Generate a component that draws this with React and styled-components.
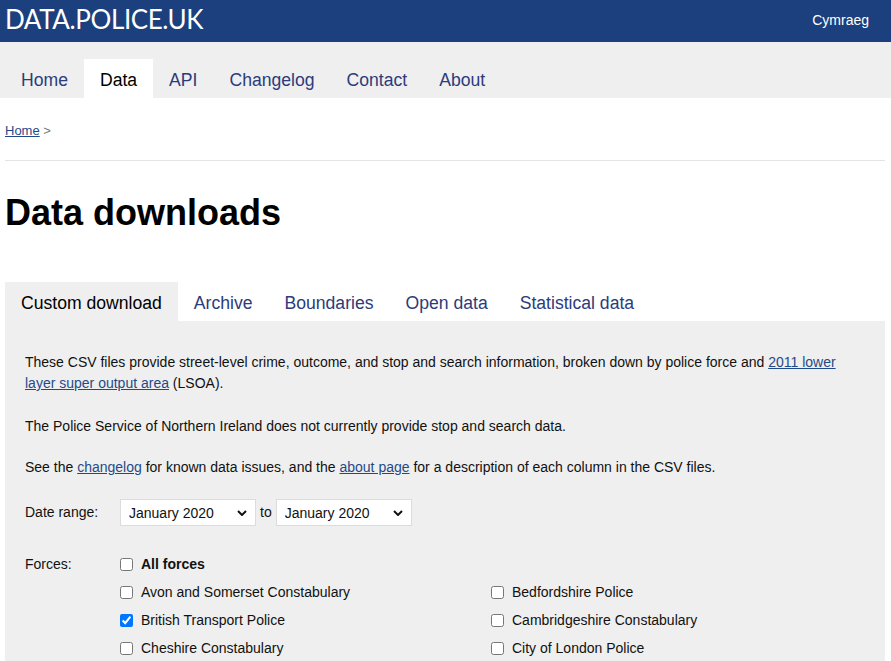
import React from 'react';
import styled, { createGlobalStyle, css } from 'styled-components';

const colors = {
  header: '#1c3f7d',
  nav: '#2c3b7c',
  link: '#1f4a8a',
  grey: '#efefef',
  text: '#111',
};

const GlobalStyle = createGlobalStyle`
  html, body {
    margin: 0;
    padding: 0;
    background: #fff;
    font-family: "Liberation Sans", Arial, sans-serif;
    color: ${colors.text};
  }
`;

const Header = styled.header`
  height: 42px;
  padding: 0 22px 0 5px;

  display: flex;
  justify-content: space-between;
  align-items: center;

  background: ${colors.header};
`;

const Logo = styled.div`
  margin-top: -4px;

  font-family: Lato, "Open Sans", sans-serif;
  font-size: 26px;
  letter-spacing: -0.4px;
  color: #fff;
`;

const LangLink = styled.a`
  margin-top: -2px;

  font-size: 14px;
  color: #fff;
  text-decoration: none;
`;

const Nav = styled.nav`
  height: 56px;
  padding: 17px 0 0 5px;
  box-sizing: border-box;

  display: flex;
  align-items: flex-end;

  background: ${colors.grey};
`;

const TabItem = styled.a(({ active, fill }) => {
  return css`
    height: 39px;
    padding: 3px 16px 0;
    box-sizing: border-box;

    display: flex;
    align-items: center;

    font-size: 17.6px;
    color: ${active ? '#000' : colors.nav};
    text-decoration: none;

    background: ${active ? fill : 'transparent'};
  `;
});

const Main = styled.main`
  padding: 0 6px 40px 5px;
`;

const Breadcrumb = styled.div`
  height: 63px;
  padding-top: 25px;
  box-sizing: border-box;

  font-size: 13px;
  color: #777;

  border-bottom: 1px solid #e4e4e4;
`;

const Link = styled.a`
  color: ${colors.link};
  text-decoration: underline;
`;

const Title = styled.h1`
  margin: 31px 0 0;
  height: 90px;

  font-size: 36px;
  font-weight: bold;
  color: #000;
`;

const Tabs = styled.div`
  display: flex;
`;

const Panel = styled.section`
  padding: 31px 20px 20px;

  font-size: 14px;
  line-height: 21px;

  background: ${colors.grey};
`;

const Para = styled.p`
  margin: 0 0 ${({ gap }) => gap}px;
`;

const FieldRow = styled.div`
  display: flex;
  align-items: ${({ top }) => (top ? 'flex-start' : 'center')};
  margin-bottom: ${({ gap }) => gap || 0}px;
`;

const FieldLabel = styled.div`
  width: 95px;
  flex-shrink: 0;
`;

const Select = styled.select`
  width: 136px;
  height: 27px;
  padding: 0 0 0 8px;
  box-sizing: border-box;

  appearance: none;
  font-family: inherit;
  font-size: 14px;
  color: #111;

  background: #fff url("data:image/svg+xml,%3Csvg xmlns='http://www.w3.org/2000/svg' width='10' height='6' viewBox='0 0 10 6'%3E%3Cpath d='M1 1l4 4 4-4' fill='none' stroke='%23111' stroke-width='2'/%3E%3C/svg%3E") no-repeat right 8px center;
  border: 1px solid #dcdcdc;
  border-radius: 0;
`;

const To = styled.span`
  margin: 0 4px;
`;

const ForceGrid = styled.div`
  display: grid;
  grid-template-columns: 371px 371px;
  row-gap: 7px;
`;

const Check = styled.label(({ bold, wide }) => {
  return css`
    display: flex;
    align-items: center;
    height: 21px;
    grid-column: ${wide ? '1 / span 2' : 'auto'};

    font-weight: ${bold ? 'bold' : 'normal'};

    input {
      width: 13px;
      height: 13px;
      margin: 0 8px 0 0;
      accent-color: #0075ff;
    }
  `;
});

const navItems = ['Home', 'Data', 'API', 'Changelog', 'Contact', 'About'];
const tabItems = ['Custom download', 'Archive', 'Boundaries', 'Open data', 'Statistical data'];

const forces = [
  ['Avon and Somerset Constabulary', false],
  ['Bedfordshire Police', false],
  ['British Transport Police', true],
  ['Cambridgeshire Constabulary', false],
  ['Cheshire Constabulary', false],
  ['City of London Police', false],
];

export default function App() {
  return (
    <>
      <GlobalStyle />
      <Header>
        <Logo>DATA.POLICE.UK</Logo>
        <LangLink href="#">Cymraeg</LangLink>
      </Header>
      <Nav>
        {navItems.map(item => (
          <TabItem key={item} href="#" active={item === 'Data'} fill="#fff">
            {item}
          </TabItem>
        ))}
      </Nav>
      <Main>
        <Breadcrumb>
          <Link href="#">Home</Link> &gt;
        </Breadcrumb>
        <Title>Data downloads</Title>
        <Tabs>
          {tabItems.map(item => (
            <TabItem key={item} href="#" active={item === 'Custom download'} fill={colors.grey}>
              {item}
            </TabItem>
          ))}
        </Tabs>
        <Panel>
          <Para gap={22}>
            These CSV files provide street-level crime, outcome, and stop and search information, broken down by police
            force and <Link href="#">2011 lower layer super output area</Link> (LSOA).
          </Para>
          <Para gap={20}>The Police Service of Northern Ireland does not currently provide stop and search data.</Para>
          <Para gap={21}>
            See the <Link href="#">changelog</Link> for known data issues, and the <Link href="#">about page</Link> for a
            description of each column in the CSV files.
          </Para>
          <FieldRow gap={28}>
            <FieldLabel>Date range:</FieldLabel>
            <Select defaultValue="2020-01">
              <option value="2020-01">January 2020</option>
            </Select>
            <To>to</To>
            <Select defaultValue="2020-01">
              <option value="2020-01">January 2020</option>
            </Select>
          </FieldRow>
          <FieldRow top>
            <FieldLabel>Forces:</FieldLabel>
            <ForceGrid>
              <Check bold wide>
                <input type="checkbox" />
                All forces
              </Check>
              {forces.map(([name, checked]) => (
                <Check key={name}>
                  <input type="checkbox" defaultChecked={checked} />
                  {name}
                </Check>
              ))}
            </ForceGrid>
          </FieldRow>
        </Panel>
      </Main>
    </>
  );
}
